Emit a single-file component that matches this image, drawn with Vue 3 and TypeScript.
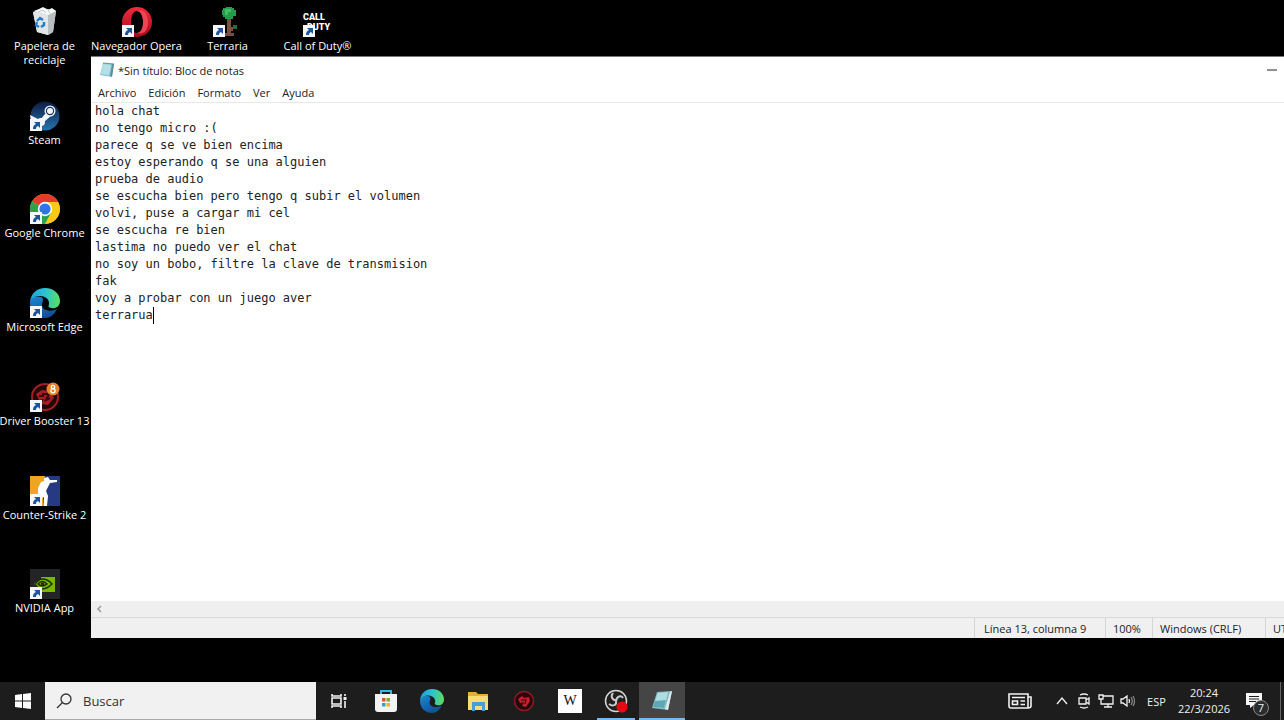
<script setup lang="ts">
import { computed, ref } from 'vue'

interface Shortcut {
  id: string
  label: string
  linked: boolean
  col: number
  row: number
}

const shortcuts: Shortcut[] = [
  { id: 'bin', label: 'Papelera de\nreciclaje', linked: false, col: 1, row: 1 },
  { id: 'steam', label: 'Steam', linked: true, col: 1, row: 2 },
  { id: 'chrome', label: 'Google Chrome', linked: true, col: 1, row: 3 },
  { id: 'edge', label: 'Microsoft Edge', linked: true, col: 1, row: 4 },
  { id: 'booster', label: 'Driver Booster 13', linked: true, col: 1, row: 5 },
  { id: 'cs', label: 'Counter-Strike 2', linked: true, col: 1, row: 6 },
  { id: 'nvidia', label: 'NVIDIA App', linked: true, col: 1, row: 7 },
  { id: 'opera', label: 'Navegador Opera', linked: true, col: 2, row: 1 },
  { id: 'terraria', label: 'Terraria', linked: true, col: 3, row: 1 },
  { id: 'cod', label: 'Call of Duty®', linked: true, col: 4, row: 1 },
]

const menus = ['Archivo', 'Edición', 'Formato', 'Ver', 'Ayuda']

const note = ref(
  [
    'hola chat',
    'no tengo micro :(',
    'parece q se ve bien encima',
    'estoy esperando q se una alguien',
    'prueba de audio',
    'se escucha bien pero tengo q subir el volumen',
    'volvi, puse a cargar mi cel',
    'se escucha re bien',
    'lastima no puedo ver el chat',
    'no soy un bobo, filtre la clave de transmision',
    'fak',
    'voy a probar con un juego aver',
    'terrarua',
  ].join('\n'),
)

const search = ref('')
const lineHeight = 17

const caret = computed(() => {
  const lines = note.value.split('\n')
  return { row: lines.length, column: lines[lines.length - 1].length + 1 }
})

const caretStyle = computed(() => ({
  left: `calc(4px + ${caret.value.column - 1}ch)`,
  top: `${(caret.value.row - 1) * lineHeight}px`,
}))
</script>

<template>
  <div class="screen">
    <main class="desktop">
      <div class="shortcuts">
        <button
          v-for="s in shortcuts"
          :key="s.id"
          type="button"
          class="shortcut"
          :style="{ gridColumn: s.col, gridRow: s.row }"
        >
          <svg class="shortcut-icon" viewBox="0 0 30 30" aria-hidden="true">
            <g v-if="s.id === 'bin'">
              <path d="M3 5 L13 1 L26 4 L23 25 L18 28 L7 25 Z" fill="#d9dcdf" />
              <path d="M3 5 L18 8 L18 28 L7 25 Z" fill="#e2e5e7" />
              <path d="M18 8 L26 4 L23 25 L18 28 Z" fill="#b9bec2" />
              <path d="M4 4 L9 2 L13 0 L18 3 L22 1 L26 4 L18 8 Z" fill="#f7f8f8" />
              <path d="M8 5 L13 3 L16 6 M18 3 L20 6" stroke="#c3c7ca" fill="none" />
              <path d="M7 14 L10 11 L13 13 M14 15 L14 18 L11 20 M9 20 L6 18 L7 15" fill="none" stroke="#1c7fce" stroke-width="2.4" />
            </g>
            <g v-else-if="s.id === 'steam'">
              <defs>
                <linearGradient id="steam-fill" x1="0" y1="0" x2="0" y2="1">
                  <stop offset="0" stop-color="#101a45" />
                  <stop offset="1" stop-color="#2475ad" />
                </linearGradient>
              </defs>
              <circle cx="15" cy="15" r="14.5" fill="url(#steam-fill)" />
              <path d="M0 14 L10 19 L15 13 L22 14 L14 21 L10 24 L1 20 Z" fill="#f4f6f8" />
              <circle cx="20" cy="10" r="5.5" fill="#f4f6f8" />
              <circle cx="20" cy="10" r="4.2" fill="#173461" />
              <circle cx="20" cy="10" r="3" fill="#f4f6f8" />
              <circle cx="11" cy="21" r="4" fill="#f4f6f8" />
            </g>
            <g v-else-if="s.id === 'chrome'">
              <circle cx="15" cy="15" r="15" fill="#f9c929" />
              <path d="M15 15 L2 7.5 A15 15 0 0 1 28 7.5 L28 8 Z" fill="#e33b2e" />
              <path d="M2 7.5 A15 15 0 0 0 15 30 L21.5 18.8 L15 15 Z" fill="#2da24c" />
              <path d="M15 8 H28 A15 15 0 0 1 15 30 L21.5 18 Z" fill="#fbc916" />
              <circle cx="15" cy="15" r="7.2" fill="#fff" />
              <circle cx="15" cy="15" r="5.6" fill="#2f75e8" />
            </g>
            <g v-else-if="s.id === 'edge'">
              <defs>
                <linearGradient id="edge-top" x1="0" y1="0.4" x2="1" y2="0.5">
                  <stop offset="0" stop-color="#1f9fdb" />
                  <stop offset="0.5" stop-color="#2bc3d2" />
                  <stop offset="1" stop-color="#5fdc5c" />
                </linearGradient>
                <linearGradient id="edge-side" x1="0" y1="0" x2="0.6" y2="1">
                  <stop offset="0" stop-color="#1b87d2" />
                  <stop offset="1" stop-color="#104f9b" />
                </linearGradient>
              </defs>
              <path d="M0 15 C0 9 6 8 11 9 C14 10 13 13 12 16 C11 21 18 25 27 21 C24 27 20 30 15 30 C7 30 0 24 0 15 Z" fill="url(#edge-side)" />
              <path d="M0 14 C1 5 7 0 15 0 C24 0 30 6 30 13 C30 19 25 21 21 20 C17 19 19 18 19 15 C19 11 15 8 10 8 C5 8 1 11 0 14 Z" fill="url(#edge-top)" />
            </g>
            <g v-else-if="s.id === 'booster'">
              <circle cx="15" cy="15" r="13" fill="#24070a" stroke="#a51c24" stroke-width="2" />
              <path d="M6 12 L12 8 L19 9 L24 16 L18 23 L11 22 L14 17 L9 18 Z" fill="#a81c25" />
              <path d="M12 12 L19 12 L16 18 L20 16 M9 14 L14 14" stroke="#35070b" stroke-width="2" fill="none" />
              <circle cx="23" cy="7" r="6.5" fill="#e88328" />
              <circle cx="23" cy="5" r="1.7" fill="none" stroke="#fff" stroke-width="1.3" />
              <circle cx="23" cy="8.7" r="2.1" fill="none" stroke="#fff" stroke-width="1.3" />
            </g>
            <g v-else-if="s.id === 'cs'">
              <path d="M0 0 H30 V30 H0 Z" fill="#263a83" />
              <path d="M0 0 H15 L12 12 L14 30 H0 Z" fill="#eea520" />
              <path d="M14 2 L18 1 L20 4 L27 4 V6 L20 7 L18 11 L16 15 L18 20 L17 30 H14 L14 21 L10 23 L6 30 H1 L8 19 L8 12 L11 6 L14 5 Z" fill="#fff" />
            </g>
            <g v-else-if="s.id === 'nvidia'">
              <path d="M0 0 H30 V30 H0 Z" fill="#222425" />
              <path d="M11 8 H25 V23 H11 Z" fill="#78b900" />
              <path d="M4 15 Q13 5 22 15 Q13 23 4 15 Z" fill="#78b900" />
              <path d="M12 10 Q18 10 22 15 Q17 20 12 20 M5 15 Q9 10 12 10 M5 15 Q8 20 12 20" stroke="#1c2a08" stroke-width="1.3" fill="none" />
              <path d="M8 15 Q12 10 17 15 Q12 19 8 15 Z" fill="none" stroke="#1c2a08" stroke-width="1.5" />
              <circle cx="12.5" cy="15" r="1.8" fill="#1c2a08" />
            </g>
            <g v-else-if="s.id === 'opera'">
              <defs>
                <linearGradient id="opera-fill" x1="0" y1="0" x2="0" y2="1">
                  <stop offset="0" stop-color="#f22a3c" />
                  <stop offset="1" stop-color="#a80a1c" />
                </linearGradient>
              </defs>
              <path fill-rule="evenodd" d="M15 0 A15 15 0 1 0 15 30 A15 15 0 1 0 15 0 Z M15 4 C19 4 21 9 21 15 C21 21 19 26 15 26 C11 26 9 21 9 15 C9 9 11 4 15 4 Z" fill="url(#opera-fill)" />
              <path d="M15 4 C24 1 26 10 26 15 C26 22 23 28 15 26 C20 25 21 20 21 15 C21 9 19 5 15 4 Z" fill="#f04453" />
            </g>
            <g v-else-if="s.id === 'terraria'">
              <path d="M14 10 H18 V26 H21 V29 H11 V26 H14 Z" fill="#79513e" />
              <path d="M18 20 H20 V24 H18 Z" fill="#79513e" />
              <path d="M10 1 H13 V0 H19 V1 H21 V3 H23 V9 H20 V12 H12 V10 H10 V8 H9 V3 H10 Z" fill="#239b4b" />
              <path d="M12 2 H18 V5 H15 V8 H12 Z" fill="#3fc064" />
              <path d="M20 18 H24 V22 H20 Z" fill="#1e713b" />
            </g>
            <g v-else class="cod-mark">
              <text x="0" y="13">CALL</text>
              <text x="4" y="23">DUTY</text>
            </g>
            <g v-if="s.linked">
              <path d="M0 18 H12 V30 H0 Z" fill="#f5f7fa" />
              <path d="M3 28 C3 25 4 24 6 23 L4 21 H10 V27 L8 25 C6 26 6 27 6 28 Z" fill="#1c559c" />
            </g>
          </svg>
          <span>{{ s.label }}</span>
        </button>
      </div>

      <section class="window" aria-label="Bloc de notas">
        <header class="titlebar">
          <svg class="note-icon" viewBox="0 0 16 16" aria-hidden="true">
            <path d="M4 1 L15 2 L13 15 L1 13 Z" fill="#86c9d6" />
            <path d="M4 2 L12 3 L10 13 L2 12 Z" fill="#b4e1e7" />
            <path d="M13 2 L15 2 L13 15 L11 14 Z" fill="#5f8f9c" />
            <path d="M4 1 L15 2" stroke="#7c8c92" />
          </svg>
          <h1>*Sin título: Bloc de notas</h1>
          <div class="controls">
            <button type="button" aria-label="Minimizar">
              <svg viewBox="0 0 10 10"><path d="M0 5 H10" /></svg>
            </button>
            <button type="button" aria-label="Maximizar">
              <svg viewBox="0 0 10 10"><path d="M1 1 H9 V9 H1 Z" /></svg>
            </button>
            <button type="button" aria-label="Cerrar">
              <svg viewBox="0 0 10 10"><path d="M0 0 L10 10 M10 0 L0 10" /></svg>
            </button>
          </div>
        </header>
        <nav class="menubar" aria-label="Menú">
          <button v-for="m in menus" :key="m" type="button">{{ m }}</button>
        </nav>
        <div class="editor">
          <textarea v-model="note" aria-label="Texto" spellcheck="false" wrap="off"></textarea>
          <span class="caret" :style="caretStyle"></span>
        </div>
        <div class="scrollbar">
          <button type="button" aria-label="Desplazar a la izquierda">
            <svg viewBox="0 0 8 8"><path d="M6 1 L3 4 L6 7" /></svg>
          </button>
        </div>
        <footer class="status">
          <span class="cell position">Línea {{ caret.row }}, columna {{ caret.column }}</span>
          <span class="cell zoom">100%</span>
          <span class="cell ending">Windows (CRLF)</span>
          <span class="cell encoding">UTF-8</span>
        </footer>
      </section>
    </main>

    <footer class="taskbar">
      <button type="button" class="start" aria-label="Inicio">
        <svg viewBox="0 0 16 16"><path d="M0 2 L7 1 V7.5 H0 Z M8 1 L16 0 V7.5 H8 Z M0 8.5 H7 V15 L0 14 Z M8 8.5 H16 V16 L8 15 Z" fill="#fff" /></svg>
      </button>
      <label class="search">
        <svg viewBox="0 0 16 16" aria-hidden="true">
          <circle cx="10" cy="6" r="5" />
          <path d="M6.5 9.5 L1 15" />
        </svg>
        <input v-model="search" type="text" placeholder="Buscar" aria-label="Buscar" />
      </label>
      <button type="button" class="task" aria-label="Vista de tareas">
        <svg class="small" viewBox="0 0 16 16" fill="none" stroke="#f2f2f2" stroke-width="1.6">
          <path d="M1 1 V3 H10 V1 M1 5 H10 V11 H1 Z M1 15 V13 H10 V15 M14 1 V3 M14 8 V15" />
          <path d="M12.500 4 H15.500 V7 H12.500 Z" fill="#f2f2f2" stroke="none" />
        </svg>
      </button>
      <nav class="tasks" aria-label="Aplicaciones">
        <button type="button" class="task" aria-label="Microsoft Store">
          <svg viewBox="0 0 24 24">
            <path d="M7 6 V2 H17 V6" fill="none" stroke="#38b6e5" stroke-width="2" />
            <path d="M1 5 H23 V20 Q23 23 20 23 H4 Q1 23 1 20 Z" fill="#f3f3f3" />
            <path d="M8 9 H11.500 V12.500 H8 Z" fill="#e05330" />
            <path d="M12.500 9 H16 V12.500 H12.500 Z" fill="#75ad35" />
            <path d="M8 14 H11.500 V17.500 H8 Z" fill="#2f9edb" />
            <path d="M12.500 14 H16 V17.500 H12.500 Z" fill="#efb424" />
          </svg>
        </button>
        <button type="button" class="task" aria-label="Microsoft Edge">
          <svg viewBox="0 0 30 30">
            <path d="M0 15 C0 9 6 8 11 9 C14 10 13 13 12 16 C11 21 18 25 27 21 C24 27 20 30 15 30 C7 30 0 24 0 15 Z" fill="url(#edge-side)" />
            <path d="M0 14 C1 5 7 0 15 0 C24 0 30 6 30 13 C30 19 25 21 21 20 C17 19 19 18 19 15 C19 11 15 8 10 8 C5 8 1 11 0 14 Z" fill="url(#edge-top)" />
          </svg>
        </button>
        <button type="button" class="task" aria-label="Explorador de archivos">
          <svg viewBox="0 0 24 24">
            <path d="M2 3 H10 L12 5 H22 V21 H2 Z" fill="#e5ae35" />
            <path d="M2 7 H22 V21 H2 Z" fill="#fbdb78" />
            <path d="M6 13 H19 V22 H16 V17 H9 V22 H6 Z" fill="#4a9bd6" />
          </svg>
        </button>
        <button type="button" class="task" aria-label="Driver Booster">
          <svg viewBox="0 0 24 24">
            <circle cx="12" cy="12" r="9.500" fill="#25090c" stroke="#8f1a22" stroke-width="1.5" />
            <path d="M6 10 L10 7 L12 9 L17 8 L18 12 L14 18 L10 17 L12 13 L8 14 Z" fill="#c5202b" />
            <path d="M9 11 L13 11 M14 10 L13 15" stroke="#25090c" />
          </svg>
        </button>
        <button type="button" class="task" aria-label="Wikipedia">
          <span class="wiki">W</span>
        </button>
        <button type="button" class="task running" aria-label="OBS Studio">
          <svg viewBox="0 0 24 24">
            <circle cx="12" cy="12" r="10.500" fill="#211f20" stroke="#d5d5d5" stroke-width="1.500" />
            <path d="M9 4 C6 8 9 12 13 11 M19 9 C17 6 13 7 12 12 M5 15 C9 18 13 16 12 12" fill="none" stroke="#c9c9c9" stroke-width="2" />
            <circle cx="18" cy="18" r="5.500" fill="#e50914" />
          </svg>
        </button>
        <button type="button" class="task running active" aria-label="Bloc de notas">
          <svg viewBox="0 0 24 24">
            <path d="M7 3 L22 2 L18 21 L2 19 Z" fill="#84bcc5" />
            <path d="M8 4 L18 3 L14 19 L3 18 Z" fill="#b0dde2" />
            <path d="M5 12 L16 11 L14 19 L3 18 Z" fill="#5ba9b5" />
            <path d="M20 3 L22 2 L18 21 L15 20 Z" fill="#e4e8e9" />
          </svg>
        </button>
      </nav>

      <div class="tray">
        <button type="button" class="news" aria-label="Noticias">
          <svg viewBox="0 0 24 16" fill="none" stroke="#f2f2f2" stroke-width="1.6">
            <path d="M1 1 H20 V15 H3 Q1 15 1 13 Z M20 4 H23 V13 Q23 15 20 15 M4 4.500 H17 M12.500 8 H17 M12.500 11.500 H17 M4.500 8 H9.500 V11.500 H4.500 Z" />
          </svg>
        </button>
        <button type="button" class="chevron" aria-label="Mostrar iconos ocultos">
          <svg viewBox="0 0 12 12" fill="none" stroke="#f2f2f2" stroke-width="1.3"><path d="M1 9 L6 3 L11 9" /></svg>
        </button>
        <button type="button" class="glyph" aria-label="Reunirse ahora">
          <svg viewBox="0 0 16 16" fill="none" stroke="#f2f2f2" stroke-width="1.3">
            <path d="M3 5 H10 V11 H3 Z M10 7 L13 5 V11 L10 9 M4 2 Q8 0 12 2 M4 14 Q8 16 12 14" />
          </svg>
        </button>
        <button type="button" class="glyph" aria-label="Red">
          <svg viewBox="0 0 16 16" fill="none" stroke="#f2f2f2" stroke-width="1.3">
            <path d="M5 3 H15 V11 H5 M10 11 V14 M6 14 H14 M1 2 H5 V6 H1 Z M3 6 V11 H5" />
          </svg>
        </button>
        <button type="button" class="glyph" aria-label="Volumen">
          <svg viewBox="0 0 16 16" fill="none" stroke="#f2f2f2" stroke-width="1.3">
            <path d="M1 6 H3 L7 3 V13 L3 10 H1 Z M9 6 Q10 8 9 10" />
            <path d="M11 4 Q13.500 8 11 12 M13 3 Q16 8 13 13" stroke="#858585" />
          </svg>
        </button>
        <button type="button" class="lang">ESP</button>
        <button type="button" class="clock">
          <time datetime="20:24">20:24</time>
          <time datetime="2026-03-22">22/3/2026</time>
        </button>
        <button type="button" class="alerts" aria-label="Notificaciones">
          <svg viewBox="0 0 16 16"><path d="M0 0 H16 V12 H8 L4 15 V12 H0 Z" fill="#f5f5f5" /><path d="M3 3.500 H13 M3 6 H13 M3 8.500 H10" stroke="#1d1d1d" /></svg>
          <span class="badge">7</span>
        </button>
        <button type="button" class="peek" aria-label="Mostrar escritorio"></button>
      </div>
    </footer>
  </div>
</template>

<style>
body {
  margin: 0;
  background: #000;
}
</style>

<style scoped>
.screen {
  display: flex;
  flex-direction: column;
  height: 100vh;
  overflow: hidden;
  background: #000;
  font-family: "Open Sans", "Noto Sans", sans-serif;
  font-size: 11px;
}

button {
  margin: 0;
  padding: 0;
  border: 0;
  background: none;
  color: inherit;
  font: inherit;
}

svg {
  display: block;
}

.desktop {
  position: relative;
  flex: 1;
  min-height: 0;
  overflow: hidden;
}

.shortcuts {
  box-sizing: border-box;
  display: grid;
  grid-template-columns: 89px 95px 87px 93px;
  grid-template-rows: repeat(7, 1fr);
  height: 100%;
  padding-bottom: 26px;
}

.shortcut {
  display: flex;
  flex-direction: column;
  align-items: center;
  justify-content: flex-start;
  gap: 2px;
  padding-top: 7px;
  color: #fff;
  line-height: 14px;
  text-align: center;
}

.shortcut span {
  white-space: pre;
}

.shortcut-icon {
  flex: none;
  width: 30px;
  height: 30px;
  overflow: visible;
}

.cod-mark {
  fill: #fff;
  font: 900 9px Roboto, "Liberation Sans", sans-serif;
}

.window {
  position: absolute;
  top: 56px;
  right: -95px;
  bottom: 44px;
  left: 91px;
  display: flex;
  flex-direction: column;
  background: #fff;
  color: #222;
  border-top: 1px solid #777;
}

.titlebar {
  display: flex;
  align-items: center;
  height: 26px;
  padding-left: 8px;
}

.note-icon {
  width: 16px;
  height: 16px;
  margin-right: 3px;
}

h1 {
  flex: 1;
  margin: 0;
  font-size: 11px;
  font-weight: 400;
}

.controls {
  display: flex;
  height: 100%;
}

.controls button {
  display: grid;
  place-items: center;
  width: 43px;
}

.controls svg {
  width: 10px;
  height: 10px;
  fill: none;
  stroke: #222;
}

.menubar {
  display: flex;
  gap: 12px;
  height: 19px;
  padding-left: 7px;
  border-bottom: 1px solid #e8e8e8;
}

.editor {
  position: relative;
  flex: 1;
  min-height: 0;
  font: 12px/17px "DejaVu Sans Mono", monospace;
}

textarea {
  display: block;
  box-sizing: border-box;
  width: 100%;
  height: 100%;
  padding: 0 4px;
  border: 0;
  outline: 0;
  resize: none;
  overflow: hidden;
  background: none;
  color: #222;
  font: inherit;
}

.caret {
  position: absolute;
  width: 1px;
  height: 17px;
  background: #000;
}

.scrollbar {
  display: flex;
  height: 16px;
  background: #efefef;
}

.scrollbar button {
  display: grid;
  place-items: center;
  width: 16px;
}

.scrollbar svg {
  width: 8px;
  height: 8px;
  fill: none;
  stroke: #999;
  stroke-width: 1.5;
}

.status {
  display: flex;
  justify-content: flex-end;
  height: 20px;
  border-top: 1px solid #d9d9d9;
  background: #f0f0f0;
  line-height: 22px;
}

.cell {
  box-sizing: border-box;
  border-left: 1px solid #d4d4d4;
  white-space: nowrap;
}

.position {
  width: 131px;
  padding-left: 9px;
}

.zoom {
  width: 47px;
  padding-left: 7px;
}

.ending {
  width: 113px;
  padding-left: 7px;
}

.encoding {
  width: 114px;
  padding-left: 7px;
}

.taskbar {
  display: flex;
  flex: none;
  height: 38px;
  background: #1d1d1d;
  color: #f2f2f2;
}

.start {
  display: grid;
  place-items: center;
  width: 45px;
}

.start svg {
  width: 16px;
  height: 16px;
}

.search {
  box-sizing: border-box;
  display: flex;
  align-items: center;
  gap: 11px;
  width: 271px;
  padding-left: 11px;
  border-bottom: 1px solid #aaa;
  background: #f1f1f1;
}

.search svg {
  flex: none;
  width: 16px;
  height: 16px;
  fill: none;
  stroke: #333;
  stroke-width: 1.3;
}

.search input {
  flex: 1;
  min-width: 0;
  padding: 0;
  border: 0;
  outline: 0;
  background: none;
  color: #333;
  font: 13px "Open Sans", "Noto Sans", sans-serif;
}

.search input::placeholder {
  color: #333;
  opacity: 1;
}

.tasks {
  display: flex;
  margin-left: 1px;
}

.task {
  box-sizing: border-box;
  display: grid;
  place-items: center;
  width: 46px;
  height: 38px;
}

.task svg {
  width: 24px;
  height: 24px;
}

.task .small {
  width: 16px;
  height: 16px;
}

.wiki {
  width: 24px;
  height: 24px;
  background: #fff;
  color: #111;
  font: 14px/24px "Liberation Serif", serif;
}

.running {
  background: linear-gradient(#76b9ed, #76b9ed) center bottom / 38px 2px no-repeat;
}

.active {
  background: linear-gradient(#76b9ed, #76b9ed) center bottom / 46px 2px no-repeat #454545;
}

.tray {
  display: flex;
  align-items: center;
  margin-left: auto;
}

.tray button {
  display: grid;
  place-items: center;
  height: 38px;
}

.tray .news {
  width: 42px;
  margin-right: 9px;
}

.news svg {
  width: 24px;
  height: 16px;
}

.chevron {
  width: 23px;
}

.chevron svg {
  width: 12px;
  height: 12px;
}

.glyph {
  width: 22px;
}

.glyph svg {
  width: 16px;
  height: 16px;
}

.lang {
  width: 35px;
}

.tray .clock {
  align-content: center;
  width: 60px;
  line-height: 16px;
}

.tray .alerts {
  position: relative;
  justify-content: start;
  width: 46px;
  padding-left: 12px;
}

.alerts svg {
  width: 16px;
  height: 16px;
}

.badge {
  position: absolute;
  right: 11px;
  bottom: 4px;
  width: 14px;
  height: 14px;
  border: 1px solid #8a8a8a;
  border-radius: 50%;
  background: #2c2c2c;
  font-size: 11px;
  line-height: 14px;
}

.tray .peek {
  width: 4px;
  border-left: 1px solid #666;
}
</style>
